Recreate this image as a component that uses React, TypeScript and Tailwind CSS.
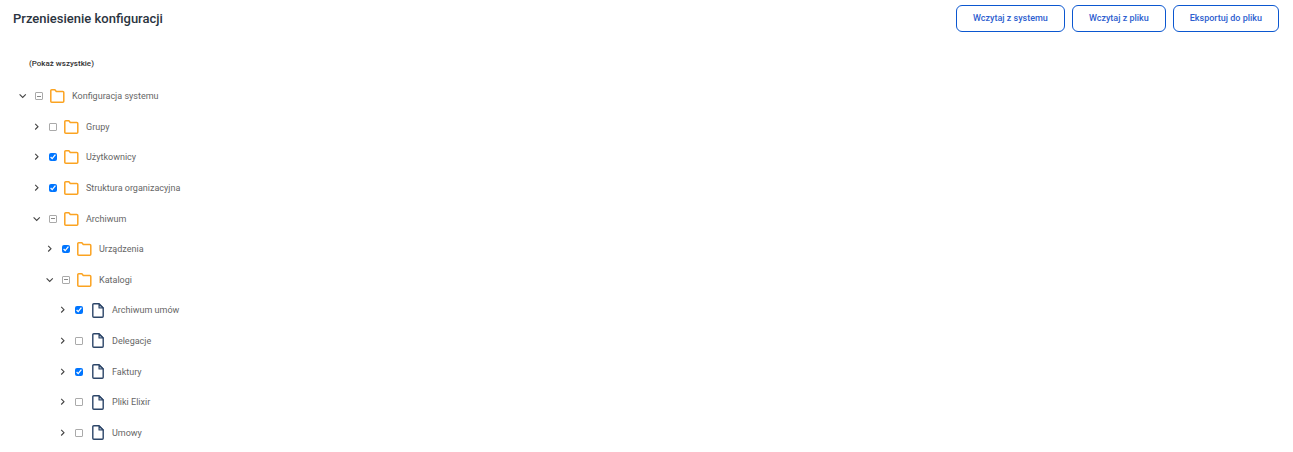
import React, { useState } from 'react';

type NodeState = 'checked' | 'unchecked' | 'partial';

interface TreeNode {
  id: string;
  label: string;
  level: number;
  kind: 'folder' | 'file';
  expanded?: boolean;
  state: NodeState;
}

const initialNodes: TreeNode[] = [
  { id: 'system', label: 'Konfiguracja systemu', level: 0, kind: 'folder', expanded: true, state: 'partial' },
  { id: 'groups', label: 'Grupy', level: 1, kind: 'folder', state: 'unchecked' },
  { id: 'users', label: 'Użytkownicy', level: 1, kind: 'folder', state: 'checked' },
  { id: 'structure', label: 'Struktura organizacyjna', level: 1, kind: 'folder', state: 'checked' },
  { id: 'archive', label: 'Archiwum', level: 1, kind: 'folder', expanded: true, state: 'partial' },
  { id: 'devices', label: 'Urządzenia', level: 2, kind: 'folder', state: 'checked' },
  { id: 'catalogs', label: 'Katalogi', level: 2, kind: 'folder', expanded: true, state: 'partial' },
  { id: 'contracts-archive', label: 'Archiwum umów', level: 3, kind: 'file', state: 'checked' },
  { id: 'delegations', label: 'Delegacje', level: 3, kind: 'file', state: 'unchecked' },
  { id: 'invoices', label: 'Faktury', level: 3, kind: 'file', state: 'checked' },
  { id: 'elixir', label: 'Pliki Elixir', level: 3, kind: 'file', state: 'unchecked' },
  { id: 'contracts', label: 'Umowy', level: 3, kind: 'file', state: 'unchecked' },
];

const indents = ['pl-[18px]', 'pl-[32px]', 'pl-[45px]', 'pl-[58px]'];

const actions = ['Wczytaj z systemu', 'Wczytaj z pliku', 'Eksportuj do pliku'];

const Chevron: React.FC<{ open?: boolean }> = ({ open }) => (
  <svg viewBox="0 0 10 10" className="w-[10px] h-[10px]" fill="none" stroke="#444" strokeWidth="1.1">
    {open ? <path d="M1.6 3.4 4.7 6.4l3.1-3" /> : <path d="M3.2 1.9 6 4.7 3.2 7.5" />}
  </svg>
);

const FolderIcon = () => (
  <svg viewBox="0 0 15 14" className="w-[15px] h-[14px]" fill="none" stroke="#fba321" strokeWidth="1.5" strokeLinejoin="round">
    <path d="M.8 1.7Q.8.8 1.7.8H4.9L6.3 2.5H12.8Q13.8 2.5 13.8 3.5V12.2Q13.8 13.2 12.8 13.2H1.8Q.8 13.2.8 12.2Z" />
  </svg>
);

const FileIcon = () => (
  <svg viewBox="0 0 12 15" className="w-[12px] h-[15px]" fill="none" stroke="#2c4568" strokeWidth="1.4" strokeLinejoin="round">
    <path d="M7 .8H1.8Q.8.8.8 1.8V13.2Q.8 14.2 1.8 14.2H10.2Q11.2 14.2 11.2 13.2V5Z" />
    <path d="M7 .8V5H11.2Z" fill="#a9b5c5" strokeWidth="1.1" />
  </svg>
);

const App: React.FC = () => {
  const [nodes, setNodes] = useState(initialNodes);

  const toggle = (id: string) => {
    setNodes((current) =>
      current.map((node) =>
        node.id === id ? { ...node, state: node.state === 'checked' ? 'unchecked' : 'checked' } : node
      )
    );
  };

  return (
    <div className="min-h-screen flex flex-col bg-white font-['Roboto',sans-serif]">
      {/* Header */}
      <header className="flex items-start justify-between pl-[13px] pr-[14px] pt-[5px]">
        <h1 className="text-[13px] leading-[27px] font-medium text-[#2b3440]">Przeniesienie konfiguracji</h1>
        <div className="flex gap-[7px]">
          {actions.map((label) => (
            <button
              key={label}
              type="button"
              className="h-[27px] px-4 border border-[#0b57d0] rounded-md text-[9px] font-medium text-[#2f5fd0]"
            >
              {label}
            </button>
          ))}
        </div>
      </header>

      <main className="flex-1 flex flex-col pt-[25px] pb-1">
        <button type="button" className="self-start ml-[29px] mb-[10px] text-[8px] leading-[14px] font-medium text-[#333]">
          (Pokaż wszystkie)
        </button>

        {/* Configuration tree */}
        <ul className="flex-1 grid auto-rows-fr">
          {nodes.map((node) => (
            <li key={node.id} className={`flex items-center ${indents[node.level]}`}>
              <button type="button" aria-label={node.label} aria-expanded={!!node.expanded}>
                <Chevron open={node.expanded} />
              </button>
              <input
                id={node.id}
                type="checkbox"
                checked={node.state === 'checked'}
                onChange={() => toggle(node.id)}
                ref={(el) => {
                  if (el) el.indeterminate = node.state === 'partial';
                }}
                className="w-2 h-2 ml-[7px] mr-[7px] not-checked:appearance-none not-checked:rounded-[1px] not-checked:border not-checked:border-[#aaa] indeterminate:bg-[linear-gradient(#888,#888)] indeterminate:bg-[length:4px_1px] indeterminate:bg-center indeterminate:bg-no-repeat"
              />
              <label htmlFor={node.id} className="flex items-center text-[9px] leading-[14px] text-[#666]">
                <span className={node.kind === 'folder' ? 'mr-[7px]' : 'ml-[2px] mr-2'}>
                  {node.kind === 'folder' ? <FolderIcon /> : <FileIcon />}
                </span>
                {node.label}
              </label>
            </li>
          ))}
        </ul>
      </main>
    </div>
  );
};

export default App;
